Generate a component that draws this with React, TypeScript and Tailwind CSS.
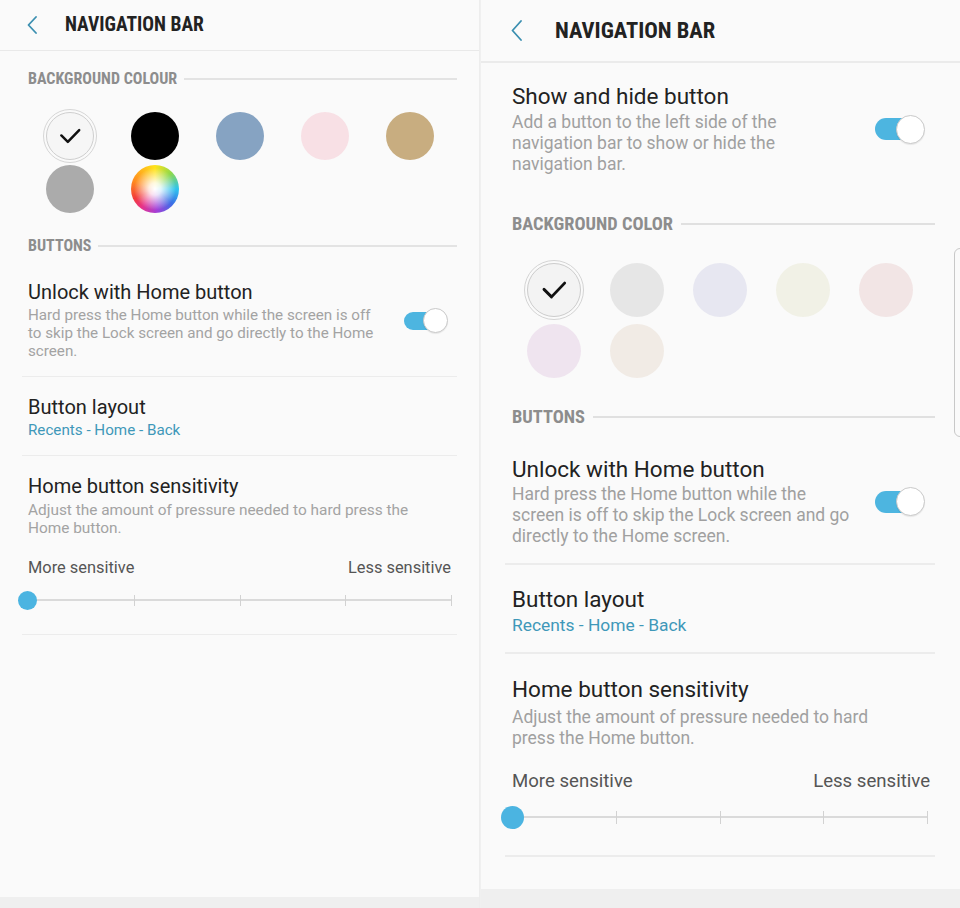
import React from "react";

const font = "font-['Roboto','Liberation_Sans',sans-serif]";
const condensed =
  "font-['Roboto_Condensed','Liberation_Sans_Narrow','DejaVu_Sans_Condensed','Roboto',sans-serif] font-bold";

const Chevron = ({ w, h }: { w: number; h: number }) => (
  <svg width={w} height={h} viewBox={`0 0 ${w} ${h}`} fill="none">
    <path
      d={`M${w - 1} 1 L1.5 ${h / 2} L${w - 1} ${h - 1}`}
      stroke="#3b8fb0"
      strokeWidth="1.8"
      strokeLinecap="round"
      strokeLinejoin="round"
    />
  </svg>
);

const Check = ({ size }: { size: number }) => (
  <svg width={size} height={size} viewBox="0 0 24 24" fill="none">
    <path
      d="M4 11.5 L10 17.5 L20.5 6.5"
      stroke="#111"
      strokeWidth="2.3"
      strokeLinecap="round"
      strokeLinejoin="round"
    />
  </svg>
);

const Toggle = ({ big }: { big?: boolean }) =>
  big ? (
    <div className="flex items-center shrink-0">
      <div className="w-[38px] h-[22px] rounded-full bg-[#4db5e0]" />
      <div className="w-[29px] h-[29px] -ml-[17px] rounded-full bg-white border border-[#c9c9c9] shadow-[0_1px_1px_rgba(0,0,0,0.08)]" />
    </div>
  ) : (
    <div className="flex items-center shrink-0">
      <div className="w-[34px] h-[18px] rounded-full bg-[#4db5e0]" />
      <div className="w-[25px] h-[25px] -ml-[15px] rounded-full bg-white border border-[#c9c9c9] shadow-[0_1px_1px_rgba(0,0,0,0.08)]" />
    </div>
  );

const ColorWheel = ({ cls }: { cls: string }) => (
  <div
    className={`${cls} rounded-full bg-[conic-gradient(from_0deg,#ffe31a,#8fd94a_45deg,#2ec4ee_90deg,#3b6fe6_130deg,#a23fd8_175deg,#e6338c_215deg,#f23b3b_245deg,#ff8a1f_290deg,#ffe31a)] flex items-center justify-center overflow-hidden`}
  >
    <div className="w-full h-full rounded-full bg-[radial-gradient(circle,#ffffff_0%,rgba(255,255,255,0.85)_18%,rgba(255,255,255,0)_62%)]" />
  </div>
);

const Slider = ({ big }: { big?: boolean }) => {
  const ticks = [0, 1, 2, 3, 4];
  return big ? (
    <div className="relative h-[24px] mt-[13px] ml-[-11px] w-[427px] flex items-center">
      <div className="absolute left-[11px] right-0 h-[2px] bg-[#dadada]" />
      <div className="absolute left-[11px] right-0 flex justify-between items-center">
        {ticks.map((t) => (
          <div key={t} className="w-px h-[13px] bg-[#d2d2d2]" />
        ))}
      </div>
      <div className="relative w-[23px] h-[23px] rounded-full bg-[#4bb4e1]" />
    </div>
  ) : (
    <div className="relative h-[20px] mt-[12px] ml-[-10px] w-[434px] flex items-center">
      <div className="absolute left-[10px] right-0 h-[2px] bg-[#dadada]" />
      <div className="absolute left-[10px] right-0 flex justify-between items-center">
        {ticks.map((t) => (
          <div key={t} className="w-px h-[11px] bg-[#d2d2d2]" />
        ))}
      </div>
      <div className="relative w-[19px] h-[19px] rounded-full bg-[#4bb4e1]" />
    </div>
  );
};

const SmallPanel = () => {
  const swatches = ["#000000", "#86a3c2", "#f8e0e5", "#c8ad80", "#ababab"];
  return (
    <div className="w-[480px] h-[908px] flex flex-col border-r border-[#ededed] bg-[#fafafa]">
      <div className="h-[51px] shrink-0 flex items-center pl-[27px] border-b border-[#e9e9e9]">
        <Chevron w={10} h={18} />
        <span className={`${condensed} ml-[28px] text-[19.5px] text-[#222]`}>
          NAVIGATION BAR
        </span>
      </div>
      <div className="flex-1">
        <div className="flex items-center pl-[28px] pr-[22px] mt-[19px]">
          <span className={`${condensed} text-[16px] leading-[18px] text-[#8d8d8d]`}>
            BACKGROUND COLOUR
          </span>
          <div className="flex-1 h-[2px] bg-[#e3e3e3] ml-[7px]" />
        </div>
        <div className="grid grid-cols-[repeat(5,48px)] gap-x-[37px] gap-y-[5px] pl-[46px] mt-[24px]">
          <div className="w-[48px] h-[48px] rounded-full flex items-center justify-center bg-[#f6f6f6] border border-[#cfcfcf] outline outline-1 outline-offset-[2px] outline-[#d6d6d6]">
            <Check size={26} />
          </div>
          {swatches.map((c) => (
            <div key={c} className="w-[48px] h-[48px] rounded-full" style={{ background: c }} />
          ))}
          <ColorWheel cls="w-[48px] h-[48px]" />
        </div>
        <div className="flex items-center pl-[28px] pr-[22px] mt-[24px]">
          <span className={`${condensed} text-[16px] leading-[18px] text-[#8d8d8d]`}>
            BUTTONS
          </span>
          <div className="flex-1 h-[2px] bg-[#e3e3e3] ml-[7px]" />
        </div>
        <div className="flex items-center pl-[28px] pr-[31px] mt-[26px] pb-[16px]">
          <div className="w-[352px]">
            <div className="text-[20px] leading-[22px] text-[#222]">Unlock with Home button</div>
            <div className="text-[15.2px] leading-[18px] text-[#a3a3a3] mt-[3px]">
              Hard press the Home button while the screen is off to skip the Lock screen and go
              directly to the Home screen.
            </div>
          </div>
          <div className="flex-1" />
          <Toggle />
        </div>
        <div className="mx-[22px] h-px bg-[#ececec]" />
        <div className="pl-[28px] pt-[19px] pb-[16px]">
          <div className="text-[20px] leading-[22px] text-[#222]">Button layout</div>
          <div className="text-[15.2px] leading-[18px] text-[#3f98b9] mt-[3px]">
            Recents - Home - Back
          </div>
        </div>
        <div className="mx-[22px] h-px bg-[#ececec]" />
        <div className="pl-[28px] pr-[28px] pt-[19px] pb-[24px]">
          <div className="text-[20px] leading-[22px] text-[#222]">Home button sensitivity</div>
          <div className="text-[15.4px] leading-[18px] text-[#a3a3a3] mt-[4px]">
            Adjust the amount of pressure needed to hard press the Home button.
          </div>
          <div className="flex justify-between text-[16.4px] leading-[20px] text-[#555] mt-[21px]">
            <span>More sensitive</span>
            <span>Less sensitive</span>
          </div>
          <Slider />
        </div>
        <div className="mx-[22px] h-px bg-[#ececec]" />
      </div>
      <div className="h-[11px] shrink-0 bg-[#efefef]" />
    </div>
  );
};

const BigPanel = () => {
  const swatches = ["#e6e6e6", "#e7e7f1", "#f1f1e6", "#f2e5e5", "#efe4ef", "#f1ebe5"];
  return (
    <div className="flex-1 h-[908px] flex flex-col bg-[#fafafa] relative">
      <div className="h-[63px] shrink-0 flex items-center pl-[30px] border-b-2 border-[#ebebeb]">
        <Chevron w={11} h={21} />
        <span className={`${condensed} ml-[33px] text-[22.5px] text-[#222]`}>
          NAVIGATION BAR
        </span>
      </div>
      <div className="flex-1">
        <div className="flex items-center pl-[31px] pr-[35px] pt-[20px] pb-[30px]">
          <div className="w-[344px]">
            <div className="text-[22.5px] leading-[26px] text-[#222]">Show and hide button</div>
            <div className="text-[17.5px] leading-[21px] text-[#a0a0a0] mt-[3px]">
              Add a button to the left side of the navigation bar to show or hide the navigation
              bar.
            </div>
          </div>
          <div className="flex-1" />
          <Toggle big />
        </div>
        <div className="flex items-center pl-[31px] pr-[25px] mt-[9px]">
          <span className={`${condensed} text-[18.4px] leading-[20px] text-[#8d8d8d]`}>
            BACKGROUND COLOR
          </span>
          <div className="flex-1 h-[2px] bg-[#e0e0e0] ml-[8px]" />
        </div>
        <div className="grid grid-cols-[repeat(5,54px)] gap-x-[29px] gap-y-[7px] pl-[46px] mt-[29px]">
          <div className="w-[54px] h-[54px] rounded-full flex items-center justify-center bg-[#f3f3f3] border border-[#cccccc] outline outline-1 outline-offset-[2px] outline-[#d4d4d4]">
            <Check size={30} />
          </div>
          {swatches.map((c) => (
            <div key={c} className="w-[54px] h-[54px] rounded-full" style={{ background: c }} />
          ))}
        </div>
        <div className="flex items-center pl-[31px] pr-[25px] mt-[29px]">
          <span className={`${condensed} text-[18.4px] leading-[20px] text-[#8d8d8d]`}>
            BUTTONS
          </span>
          <div className="flex-1 h-[2px] bg-[#e0e0e0] ml-[8px]" />
        </div>
        <div className="flex items-center pl-[31px] pr-[35px] mt-[29px] pb-[16px]">
          <div className="w-[344px]">
            <div className="text-[22.5px] leading-[26px] text-[#222]">Unlock with Home button</div>
            <div className="text-[17.5px] leading-[21px] text-[#a0a0a0] mt-[2px]">
              Hard press the Home button while the screen is off to skip the Lock screen and go
              directly to the Home screen.
            </div>
          </div>
          <div className="flex-1" />
          <Toggle big />
        </div>
        <div className="ml-[24px] mr-[25px] h-[2px] bg-[#ececec]" />
        <div className="pl-[31px] pt-[21px] pb-[17px]">
          <div className="text-[22.5px] leading-[26px] text-[#222]">Button layout</div>
          <div className="text-[17.4px] leading-[20px] text-[#3f98b9] mt-[3px]">
            Recents - Home - Back
          </div>
        </div>
        <div className="ml-[24px] mr-[25px] h-[2px] bg-[#ececec]" />
        <div className="pl-[31px] pr-[30px] pt-[22px] pb-[26px]">
          <div className="text-[22.5px] leading-[26px] text-[#222]">Home button sensitivity</div>
          <div className="text-[17.5px] leading-[21px] text-[#a0a0a0] mt-[5px] w-[390px]">
            Adjust the amount of pressure needed to hard press the Home button.
          </div>
          <div className="flex justify-between text-[18.6px] leading-[22px] text-[#555] mt-[21px]">
            <span>More sensitive</span>
            <span>Less sensitive</span>
          </div>
          <Slider big />
        </div>
        <div className="ml-[24px] mr-[25px] h-[2px] bg-[#ececec]" />
      </div>
      <div className="h-[19px] shrink-0 bg-[#efefef]" />
      <div className="absolute right-[-6px] top-[248px] w-[12px] h-[189px] rounded-[6px] border border-[#c8c8c8]" />
    </div>
  );
};

export default function App() {
  return (
    <div className={`${font} w-[960px] h-[908px] flex bg-[#fafafa] overflow-hidden`}>
      <SmallPanel />
      <div className="w-px bg-[#f0f0f0]" />
      <BigPanel />
    </div>
  );
}
